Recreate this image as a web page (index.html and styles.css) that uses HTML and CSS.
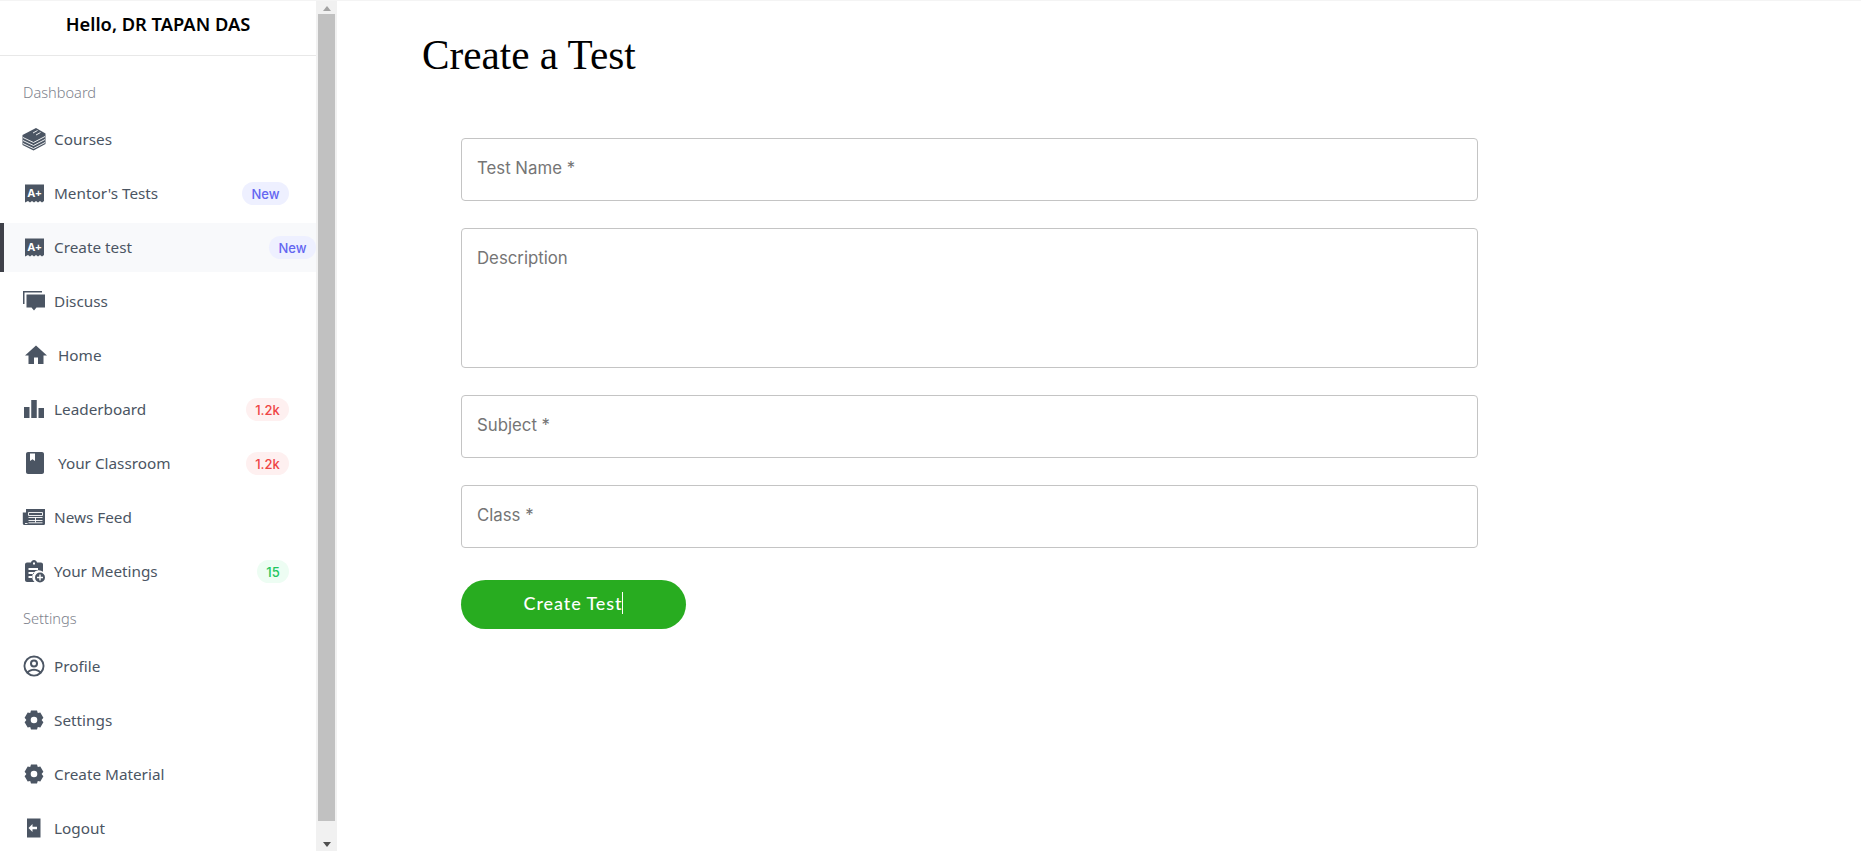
FILE: index.html
```html
<!DOCTYPE html>
<html lang="en">
<head>
<meta charset="utf-8">
<title>Create a Test</title>
<link rel="stylesheet" href="styles.css">
</head>
<body>
<div class="app">
  <aside class="sidebar">
    <nav class="nav">
      <header class="hello">Hello, DR TAPAN DAS</header>
      <div class="label label-first">Dashboard</div>
      <a class="row"><svg class="ic" viewBox="0 0 24 24"><path d="M14 1 23.500 6.500V17L11.500 23.500 .5 18V8z"/><path d="M1 10.500 11.500 15.500 23 9.500M1 13.500 11.500 18.500 23 12.500M1 16.500 11.500 21.500 23 15.500" class="cut"/><path d="M11 6 15.500 3.500M14 8 18.500 5.500" class="cut"/></svg><span class="txt">Courses</span></a>
      <a class="row"><svg class="ic" viewBox="0 0 24 24"><path d="M3 3.500H22V20L20 21.500 18 20 16 21.500 14 20 12 21.500 10 20 8 21.500 6 20 3 21.500z"/><text class="aplus" x="12.500" y="16">A+</text></svg><span class="txt">Mentor's Tests</span><span class="badge new">New</span></a>
      <a class="row active"><svg class="ic" viewBox="0 0 24 24"><path d="M3 3.500H22V20L20 21.500 18 20 16 21.500 14 20 12 21.500 10 20 8 21.500 6 20 3 21.500z"/><text class="aplus" x="12.500" y="16">A+</text></svg><span class="txt">Create test</span><span class="badge new">New</span></a>
      <a class="row"><svg class="ic" viewBox="0 0 24 24"><path d="M1 2H20V3.500H2.500V15H1z"/><path d="M4.500 5.500H23V18.500H14.500L12 21.500 9.500 18.500H4.500z"/></svg><span class="txt">Discuss</span></a>
      <a class="row"><svg class="ic ic-home" viewBox="0 0 24 24"><path d="M10 21v-6.500h4V21h5.500v-8.500H23L12 2.500 1 12.500h3.500V21z"/></svg><span class="txt txt-far">Home</span></a>
      <a class="row"><svg class="ic" viewBox="0 0 24 24"><path d="M7.500 21H2V10h5.500zM14.750 3h-5.500v18h5.500zM22 11h-5.500v10H22z"/></svg><span class="txt">Leaderboard</span><span class="badge hot">1.2k</span></a>
      <a class="row"><svg class="ic ic-book" viewBox="0 0 24 24"><path fill-rule="evenodd" d="M5 1h14c1.100 0 2 .9 2 2v18c0 1.100-.9 2-2 2H5c-1.100 0-2-.9-2-2V3c0-1.100.9-2 2-2zM7 2.500V10l2.500-1.800L12 10V2.500z"/></svg><span class="txt">Your Classroom</span><span class="badge hot">1.2k</span></a>
      <a class="row"><svg class="ic" viewBox="0 0 24 24"><path d="M4 4H23V18.500c0 1-.8 1.500-1.500 1.500H2.500C1.500 20 .8 19.300 .8 18.500V7.500H4z"/><path d="M5.500 18.500H3M6.500 7.500H20.500V10.500H6.500zM6.500 12.500H20.500M6.500 15.500H20.500M13.500 12.500V17.500M6.500 17.800H20.500" class="cut"/></svg><span class="txt">News Feed</span></a>
      <a class="row"><svg class="ic" viewBox="0 0 24 24"><path fill-rule="evenodd" d="M5 3.500H9C9.300 2 10.500 1 12 1s2.700 1 3 2.500h4c1 0 2 .8 2 2v7.300A6.500 6.500 0 0 0 12.500 23H5c-1.100 0-2-.9-2-2V5.500c0-1.200 1-2 2-2zM11 3.500v2h2v-2zM6.500 9V11H16V9zM6.500 13V15H12V13zM6.500 17V19H10.500V17z"/><path fill-rule="evenodd" d="M18 13.500a5 5 0 1 1 0 10 5 5 0 0 1 0-10zM17.300 15.500v2.300H15v1.400h2.300v2.300h1.400v-2.300H21v-1.400h-2.300v-2.300z"/></svg><span class="txt">Your Meetings</span><span class="badge ok">15</span></a>
      <div class="label">Settings</div>
      <a class="row"><svg class="ic" viewBox="0 0 24 24"><path fill-rule="evenodd" d="M12 1.500a10.500 10.500 0 1 1 0 21 10.500 10.500 0 0 1 0-21zm0 2a8.500 8.500 0 0 0-6.600 13.800C7 15.500 9.400 14.700 12 14.700s5 .8 6.600 2.600A8.500 8.500 0 0 0 12 3.500zm0 13.200c-2 0-3.900.6-5.200 2a8.500 8.500 0 0 0 10.400 0c-1.300-1.400-3.200-2-5.200-2zM12 5.500a4 4 0 1 1 0 8 4 4 0 0 1 0-8zm0 2a2 2 0 1 0 0 4 2 2 0 0 0 0-4z"/></svg><span class="txt">Profile</span></a>
      <a class="row"><svg class="ic" viewBox="0 0 24 24"><path fill-rule="evenodd" d="M9 2.500H15L15.800 5 18.300 4.500 21.400 9.700 19.600 12 21.400 14.300 18.300 19.500 15.800 19 15 21.500H9L8.200 19 5.700 19.500 2.600 14.300 4.400 12 2.600 9.700 5.700 4.500 8.200 5zM12 8.700a3.300 3.300 0 1 0 0 6.600 3.300 3.300 0 0 0 0-6.600z"/></svg><span class="txt">Settings</span></a>
      <a class="row"><svg class="ic" viewBox="0 0 24 24"><path fill-rule="evenodd" d="M9 2.500H15L15.800 5 18.300 4.500 21.400 9.700 19.600 12 21.400 14.300 18.300 19.500 15.800 19 15 21.500H9L8.200 19 5.700 19.500 2.600 14.300 4.400 12 2.600 9.700 5.700 4.500 8.200 5zM12 8.700a3.300 3.300 0 1 0 0 6.600 3.300 3.300 0 0 0 0-6.600z"/></svg><span class="txt">Create Material</span></a>
      <a class="row"><svg class="ic" viewBox="0 0 24 24"><path fill-rule="evenodd" d="M5 2.500H18.500V21.500H5zM10.500 8 6.500 12 10.500 16V13.200H15V10.800H10.500z"/></svg><span class="txt">Logout</span></a>
    </nav>
    <div class="scrollbar">
      <div class="arrow arrow-up"></div>
      <div class="thumb"></div>
      <div class="arrow arrow-down"></div>
    </div>
  </aside>
  <main class="main">
    <h1 class="title">Create a Test</h1>
    <form class="form">
      <input class="field" type="text" placeholder="Test Name *">
      <textarea class="field area" placeholder="Description"></textarea>
      <input class="field" type="text" placeholder="Subject *">
      <input class="field" type="text" placeholder="Class *">
      <button class="submit" type="button"><span class="submit-label">Create Test</span></button>
    </form>
  </main>
</div>
</body>
</html>
```
FILE: styles.css
```css
* { box-sizing: border-box; }
html, body { margin: 0; height: 100%; overflow: hidden; background: #fff; }
.app { display: flex; height: 851px; border-top: 1px solid #f4f4f4; }

.sidebar { display: flex; flex: 0 0 337px; height: 850px; }
.nav { width: 317px; border-right: 1px solid #f1f1f1; overflow: hidden; font-family: "Noto Sans", sans-serif; }
.hello { height: 55px; padding-top: 10px; border-bottom: 1px solid #e8e8e8; text-align: center; font-size: 18.3px; line-height: 26px; font-weight: 600; color: #000; }
.label { margin: 12px 0 14px 23px; height: 20px; font-size: 14.6px; line-height: 20px; font-weight: 300; color: #7d828c; }
.label-first { margin-top: 26px; margin-bottom: 13px; }

.row { display: flex; align-items: center; height: 49px; margin-bottom: 5px; padding: 0 27px 0 22px; color: #4b5563; font-size: 15.3px; }
.row.active { padding-right: 0; background: #f8f9fb; box-shadow: inset 4px 0 0 #3f4149; }
.ic { flex: none; width: 24px; height: 24px; margin-bottom: 2px; fill: #4b5563; }
.cut { fill: none; stroke: #fff; stroke-width: .9; }
.ic-home { margin-left: 2px; }
.ic-book { margin-left: 1px; }
.aplus { font-family: "Noto Sans", sans-serif; font-size: 11px; font-weight: 700; fill: #fff; text-anchor: middle; }
.txt { margin-left: 8px; padding-bottom: 2px; flex: 1; white-space: nowrap; }
.txt-far { margin-left: 10px; }
.ic-book + .txt { margin-left: 11px; }

.badge { flex: none; height: 23px; padding-top: 1px; border-radius: 12px; text-align: center; font-family: Inter, sans-serif; font-size: 13px; line-height: 23px; font-weight: 500; }
.new { width: 47px; background: #eef0ff; color: #6366f1; }
.hot { width: 43px; background: #fef0f0; color: #ef4444; }
.ok { width: 32px; background: #edfdf3; color: #22c55e; }

.scrollbar { display: flex; flex-direction: column; width: 20px; background: #f1f1f1; padding: 0 2px 0 1px; }
.arrow { width: 0; height: 0; margin: 0 auto; border-left: 4px solid transparent; border-right: 4px solid transparent; }
.arrow-up { flex: none; margin-top: 5px; margin-bottom: 3px; border-bottom: 5px solid #a3a3a3; }
.arrow-down { flex: none; margin-top: 21px; border-top: 5px solid #505050; }
.thumb { flex: 0 0 807px; background: #c1c1c1; }

.main { flex: 1; padding: 27px 0 0 85px; }
.title { margin: 0 0 56px; height: 54px; font-family: "Liberation Serif", serif; font-size: 41.2px; line-height: 54px; font-weight: 400; color: #000; }
.form { display: flex; flex-direction: column; gap: 27px; width: 1017px; margin-left: 39px; }
.field { display: block; width: 100%; height: 63px; padding: 0 15px 3px; border: 1px solid #c4c4c4; border-radius: 4px; background: #fff; font-family: Inter, sans-serif; font-size: 16.8px; outline: none; }
.field::placeholder { color: #757575; opacity: 1; }
.area { height: 140px; padding: 19px 15px 0; resize: none; }
.submit { align-self: flex-start; width: 225px; height: 49px; margin-top: 5px; padding: 0 0 4px; border: 0; border-radius: 25px; background: #28ac20; color: #fff; font-family: Lato, sans-serif; font-size: 18px; font-weight: 500; letter-spacing: .9px; }
.submit-label { border-right: 1px solid #fff; }
```
